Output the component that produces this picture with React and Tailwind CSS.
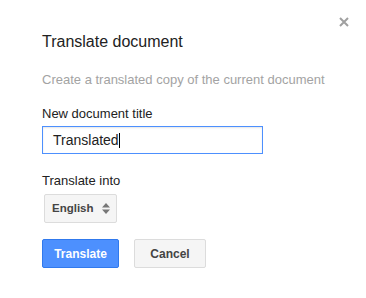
import React from "react";

export default function App() {
  return (
    <div
      className="relative w-[366px] h-[298px] bg-white overflow-hidden"
      style={{ fontFamily: '"Liberation Sans", Arial, sans-serif' }}
    >
      <svg
        className="absolute left-[339px] top-[17px]"
        width="10"
        height="10"
        viewBox="0 0 10 10"
      >
        <path d="M1 1L9 9M9 1L1 9" stroke="#a0a0a0" strokeWidth="2" />
      </svg>
      <div className="flex flex-col pl-[42px] pt-[32px]">
        <div className="text-[16px] leading-[20px] text-[#222]">Translate document</div>
        <div className="mt-[19.5px] text-[13px] leading-[16px] text-[#a3a3a3]">
          Create a translated copy of the current document
        </div>
        <div className="mt-[18px] text-[13px] leading-[16px] text-[#222]">New document title</div>
        <div className="mt-[4.5px] w-[221px] h-[28px] border border-[#4d90fe] shadow-[inset_0_1px_2px_rgba(0,0,0,0.1)] flex items-center pl-[10px] text-[14px] text-[#222]">
          <span>Translated</span>
          <span className="inline-block w-px h-[15px] bg-black" />
        </div>
        <div className="mt-[18.5px] text-[13px] leading-[16px] text-[#222]">Translate into</div>
        <div className="mt-[5.5px] ml-[2px] w-[73px] h-[29px] border border-[#dcdcdc] bg-[#f5f5f5] rounded-[2px] flex items-center pl-[7px] text-[11.5px] font-bold text-[#444]">
          <span>English</span>
          <svg className="ml-[8px]" width="8" height="11" viewBox="0 0 8 11">
            <path d="M4 0L8 4.5H0Z M4 11L8 6.5H0Z" fill="#777" />
          </svg>
        </div>
        <div className="mt-[16px] flex gap-[15px]">
          <div className="w-[77px] h-[29px] rounded-[2px] border border-[#3079ed] bg-[#4d90fe] text-white text-[12px] font-bold flex items-center justify-center">
            Translate
          </div>
          <div className="w-[72px] h-[29px] rounded-[2px] border border-[#dcdcdc] bg-[#f5f5f5] text-[#444] text-[12px] font-bold flex items-center justify-center">
            Cancel
          </div>
        </div>
      </div>
    </div>
  );
}
